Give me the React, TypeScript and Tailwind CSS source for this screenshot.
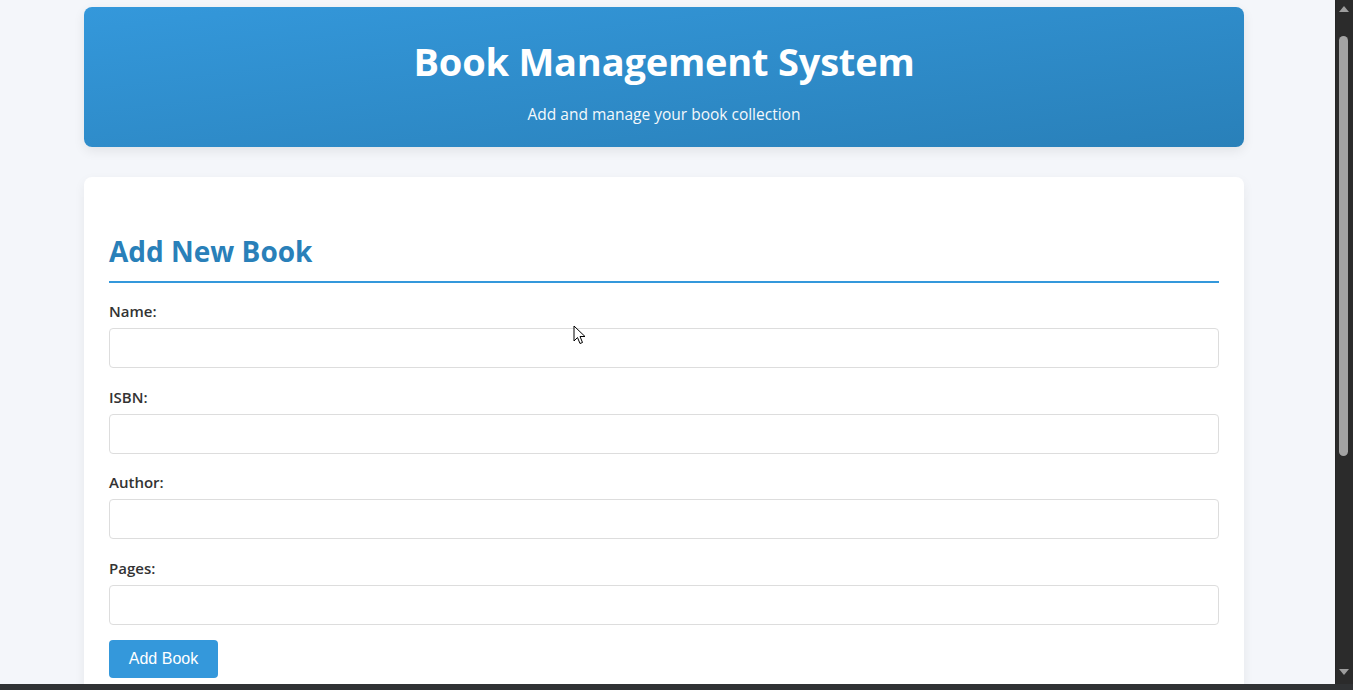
const fields = ["Name:", "ISBN:", "Author:", "Pages:"];

function FakeScrollbar() {
  return (
    <div className="relative w-[18px] shrink-0 border-l border-[#262626] bg-[#2b2b2b]">
      <svg className="absolute left-[2px] top-[5px]" width="12" height="8" viewBox="0 0 12 8">
        <path d="M6 1 L11 7 L1 7 Z" fill="#9d9d9d" />
      </svg>
      <div className="absolute left-[3px] top-[36px] h-[420px] w-[9px] rounded-full bg-[#a3a3a3]" />
      <svg className="absolute bottom-[8px] left-[2px]" width="12" height="8" viewBox="0 0 12 8">
        <path d="M1 1 L11 1 L6 7 Z" fill="#9d9d9d" />
      </svg>
    </div>
  );
}

function Cursor() {
  return (
    <svg className="pointer-events-none absolute left-[573px] top-[325px]" width="13" height="20" viewBox="0 0 13 20">
      <path d="M1 1 L1 16 L4.5 12.5 L7 18.5 L9.5 17.5 L7 11.5 L12 11.5 Z" fill="#fff" stroke="#000" strokeWidth="1" strokeLinejoin="round" />
    </svg>
  );
}

export default function App() {
  return (
    <div className="flex h-[690px] flex-col overflow-hidden bg-[#2f3133] font-['Open_Sans',sans-serif]">
      <div className="flex h-[684px]">
        <div className="relative flex-1 overflow-hidden bg-[#f4f6fa]">
          <div className="ml-[84px] w-[1160px] pt-[7px]">
            <header className="flex h-[140px] flex-col items-center rounded-lg bg-gradient-to-br from-[#3498db] to-[#2980b9] pt-[34px] text-white shadow-[0_4px_12px_rgba(0,0,0,0.08)]">
              <h1 className="text-[38px] leading-[40px] font-bold tracking-[-0.2px]">Book Management System</h1>
              <p className="mt-[23px] text-[15.5px] leading-[20px] opacity-95">Add and manage your book collection</p>
            </header>

            <section className="mt-[30px] rounded-lg bg-white px-[25px] pt-[55px] pb-[30px] shadow-[0_4px_12px_rgba(0,0,0,0.06)]">
              <h2 className="border-b-2 border-[#3498db] pb-[11px] text-[28px] leading-[38px] font-bold text-[#2980b9]">
                Add New Book
              </h2>
              <form className="mt-[17px]" onSubmit={(e) => e.preventDefault()}>
                {fields.map((f, i) => (
                  <div key={f} className={i === fields.length - 1 ? "mb-[15px]" : "mb-[17.5px]"}>
                    <label className="mb-[6px] block text-[15px] leading-[22px] font-semibold text-[#333]">{f}</label>
                    <input
                      type="text"
                      className="block h-[40px] w-full rounded-[4px] border border-[#ddd] bg-white px-[10px] text-[15px] outline-none"
                    />
                  </div>
                ))}
                <button
                  type="submit"
                  className="h-[38px] w-[109px] rounded-[4px] bg-[#3498db] font-['Liberation_Sans',sans-serif] text-[16px] text-white"
                >
                  Add Book
                </button>
              </form>
            </section>
          </div>
          <Cursor />
        </div>
        <FakeScrollbar />
      </div>
      <div className="h-[6px] bg-[#303234]" />
    </div>
  );
}
